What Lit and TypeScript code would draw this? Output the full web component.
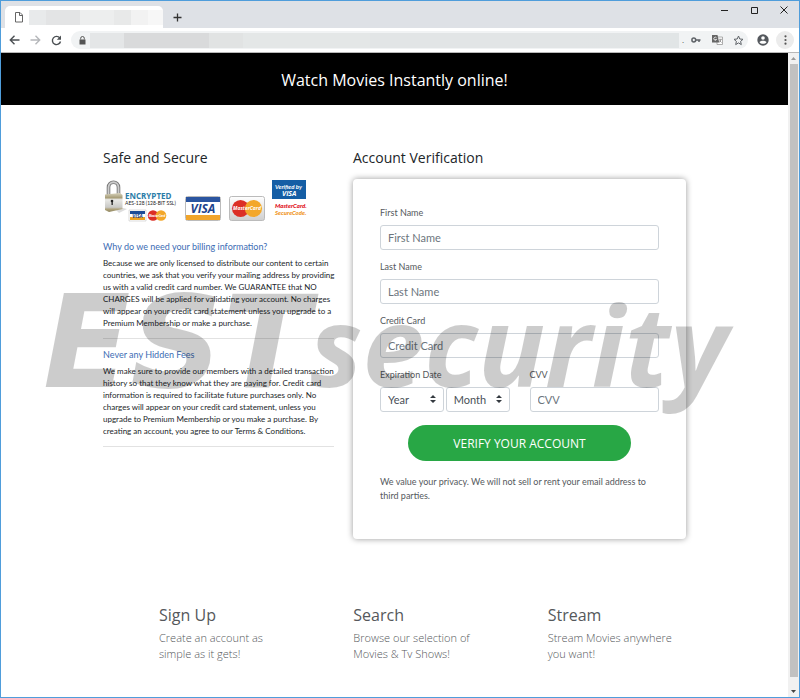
import { LitElement, html, svg, css } from "lit";
import { customElement } from "lit/decorators.js";

const SANS = css`"Open Sans", "Noto Sans", sans-serif`;
const SMALL = css`Lato, "Open Sans", sans-serif`;

@customElement("browser-chrome")
class BrowserChrome extends LitElement {
  static styles = css`
    :host { display: block; font-family: ${SANS}; background: #fff; }
    button { border: 0; padding: 0; margin: 0; background: none; display: grid; place-items: center; color: #5f6368; }
    svg { display: block; }
    .strip { display: flex; height: 27px; background: #dee1e6; }
    .tab { display: flex; align-items: center; gap: 5px; width: 158px; height: 22px; margin: 5px 0 0 4px; padding-left: 9px; box-sizing: border-box; background: #fff; border-radius: 5px 5px 0 0; }
    .blur-title { width: 134px; height: 15px; background: linear-gradient(90deg, #e8eaeb 0 17px, #e3e4e5 17px 51px, #edeeee 51px 85px, #e8e9e9 85px 102px, #f2f2f2 102px 119px, #f7f7f7 119px); }
    .new { width: 28px; height: 22px; margin-top: 5px; }
    .grow { flex: 1; }
    .win { width: 30px; height: 18px; color: #222; }
    .bar { display: flex; align-items: center; height: 24px; border-bottom: 1px solid #b8b8b8; }
    .nav { width: 21px; height: 24px; }
    .nav:first-child { margin-left: 3px; }
    .dim { color: #b5b7ba; }
    .address { display: flex; align-items: center; flex: 1; height: 18px; margin-left: 4px; border-radius: 9px; background: #f1f3f4; padding: 0 1px 0 8px; gap: 3px; }
    .blur-url { flex: 1; height: 15px; margin-left: 1px; background: linear-gradient(90deg, #e4e6e7 0 34px, #d9dadb 34px 119px, #e1e3e3 119px 153px, #e4e7e7 153px 280px, #e2e5e6 280px 480px, #e1e5e6); }
    .dot { font-size: 8px; line-height: 8px; color: #444; }
    .addr-btn { width: 18px; height: 18px; }
    .account { width: 22px; height: 22px; margin: 0 2px 0 4px; }
    .menu { width: 18px; height: 18px; border-radius: 9px; background: #ececec; margin-right: 5px; }
  `;
  render() {
    return html`
      <div class="strip">
        <div class="tab">
          <svg width="10" height="11" viewBox="0 0 10 11" fill="none" stroke="#666"><path d="M1.500 .5h4.500l2.500 2.500v7h-7zM5.500 .5v3h3"/></svg>
          <span class="blur-title"></span>
        </div>
        <button class="new" aria-label="New tab"><svg width="9" height="9" viewBox="0 0 9 9" stroke="#333" stroke-width="1.300"><path d="M4.500 0.500v8M0.500 4.500h8"/></svg></button>
        <span class="grow"></span>
        <button class="win" aria-label="Minimize"><svg width="7" height="7" viewBox="0 0 7 7"><path d="M0 3.500h7" stroke="currentColor"/></svg></button>
        <button class="win" aria-label="Maximize"><svg width="7" height="7" viewBox="0 0 7 7"><path d="M.5 .5h6v6h-6z" fill="none" stroke="currentColor"/></svg></button>
        <button class="win" aria-label="Close"><svg width="8" height="8" viewBox="0 0 8 8"><path d="M.5 .5l7 7M7.500 .5l-7 7" stroke="currentColor"/></svg></button>
      </div>
      <div class="bar">
        <button class="nav" aria-label="Back"><svg width="11" height="10" viewBox="0 0 11 10" fill="none" stroke="#4b4f53" stroke-width="1.400"><path d="M10.500 5H1.500M5.500 .8L1.300 5l4.200 4.200"/></svg></button>
        <button class="nav dim" aria-label="Forward"><svg width="11" height="10" viewBox="0 0 11 10" fill="none" stroke="currentColor" stroke-width="1.400"><path d="M.5 5h9M5.500 .8L9.700 5 5.500 9.200"/></svg></button>
        <button class="nav" aria-label="Reload"><svg width="11" height="11" viewBox="0 0 11 11"><path d="M8.800 3A4.100 4.100 0 1 0 9.500 6.500" fill="none" stroke="#4b4f53" stroke-width="1.400"/><path d="M10 .6v4.200H5.800z" fill="#4b4f53"/></svg></button>
        <div class="address">
          <svg width="7" height="9" viewBox="0 0 7 9"><path d="M.5 3.500h6v5h-6z" fill="#555"/><path d="M1.700 3.500V2.300a1.800 1.800 0 0 1 3.600 0v1.200" fill="none" stroke="#555"/></svg>
          <span class="blur-url"></span>
          <span class="dot">.</span>
          <button class="addr-btn" aria-label="Passwords"><svg width="10" height="6" viewBox="0 0 10 6"><path d="M4.500 3H9.500M8 3v2" stroke="#5f6368" stroke-width="1.500"/><circle cx="2.800" cy="3" r="1.900" fill="none" stroke="#5f6368" stroke-width="1.500"/></svg></button>
          <button class="addr-btn" aria-label="Translate"><svg width="11" height="10" viewBox="0 0 11 10"><path d="M5 2h5.500v7.500H5z" fill="#fff" stroke="#999" stroke-width=".8"/><path d="M0 0h5.500l1.700 7.500H0z" fill="#666"/><path d="M4.500 2.800A1.500 1.500 0 1 0 4.600 4.500H3.200" fill="none" stroke="#fff" stroke-width=".8"/><path d="M6.800 4.300h3M9 4.300c-.2 1.500-1 2.500-2 3M7.500 5.500l2 2" stroke="#777" stroke-width=".7" fill="none"/></svg></button>
          <button class="addr-btn" aria-label="Bookmark"><svg width="11" height="11" viewBox="0 0 11 11"><path d="M5.500 1l1.300 3 3.200.3-2.400 2.100.7 3.200-2.800-1.700-2.800 1.700.7-3.200L1 4.300 4.200 4z" fill="none" stroke="#5f6368"/></svg></button>
        </div>
        <button class="account" aria-label="Profile"><svg width="12" height="12" viewBox="0 0 12 12"><circle cx="6" cy="6" r="5.700" fill="#54585d"/><circle cx="6" cy="4" r="1.800" fill="#fff"/><path d="M2.500 8.200C3.200 6.200 8.800 6.200 9.500 8.200 8 10.200 4 10.200 2.500 8.200z" fill="#fff"/></svg></button>
        <button class="menu" aria-label="Menu"><svg width="3" height="10" viewBox="0 0 3 10" fill="#555"><circle cx="1.500" cy="1.300" r="1.100"/><circle cx="1.500" cy="5" r="1.100"/><circle cx="1.500" cy="8.700" r="1.100"/></svg></button>
      </div>`;
  }
}

const masterCard = (x: number, y: number, r: number, fs: number) => svg`
  <circle cx=${x - r * 0.75} cy=${y} r=${r} fill="#dc2f26"/>
  <circle cx=${x + r * 0.75} cy=${y} r=${r} fill="#f3a72a"/>
  <text x=${x} y=${y + fs / 3} font-size=${fs} text-anchor="middle" font-weight="700" font-style="italic" fill="#fff">MasterCard</text>`;

@customElement("trust-badges")
class TrustBadges extends LitElement {
  static styles = css`
    :host { display: flex; height: 44px; font-family: ${SANS}; }
    svg { display: block; overflow: visible; }
    .visa { margin: 17px 0 0 11px; }
    .master { margin: 17px 0 0 8px; }
    .verified { margin: 1px 0 0 7px; }
    .narrow { font-family: ${SMALL}; }
  `;
  render() {
    return html`
      <svg width="71" height="44" viewBox="0 0 71 44" role="img" aria-label="Encrypted">
        <defs><linearGradient id="body" x2="0" y2="1"><stop stop-color="#d8d3bd"/><stop offset=".25" stop-color="#a79d78"/><stop offset=".35" stop-color="#e9e9e6"/><stop offset=".75" stop-color="#c9c9c6"/><stop offset=".85" stop-color="#b0a47e"/><stop offset="1" stop-color="#8f865f"/></linearGradient></defs>
        <path d="M5.500 17V8.500C5.500 1.500 15.500 1.500 15.500 8.500V15" fill="none" stroke="#777" stroke-width="3.600"/>
        <path d="M5.500 17V8.500C5.500 1.500 15.500 1.500 15.500 8.500V15" fill="none" stroke="#ccc" stroke-width="1.800"/>
        <path d="M13 31l7-2 4 1-8 4z" fill="#ddd"/>
        <path d="M2 15.500l15-1.500 2.500 2v14L6 33l-4-2z" fill="url(#body)"/>
        <circle cx="9" cy="22" r="1.300" fill="#222"/><path d="M8.500 22h1.300v4H8.500z" fill="#222"/>
        <text x="22" y="20" font-size="8" font-weight="700" fill="#2b7ca8">ENCRYPTED</text>
        <text class="narrow" x="22" y="26" font-size="5" fill="#222">AES-128 (128-BIT SSL)</text>
        <path d="M26 31h17v11H26z" fill="#fff" stroke="#bbb" stroke-width=".5"/><path d="M27 32h15v3H27z" fill="#1c4b96"/><path d="M27 38h15v3H27z" fill="#eda222"/>
        <text x="34.500" y="38.500" font-size="5" font-weight="700" font-style="italic" text-anchor="middle" fill="#173f86">VISA</text>
        ${masterCard(54, 36.5, 5.3, 3)}
      </svg>
      <svg class="visa" width="36" height="25" viewBox="0 0 36 25" role="img" aria-label="Visa">
        <rect x=".5" y=".5" width="35" height="24" rx="2" fill="#fff" stroke="#bbb"/>
        <path d="M1 1h34v5H1z" fill="#2b55a0"/><path d="M1 19h34v5H1z" fill="#f1a52b"/>
        <text x="18" y="17" font-size="12" font-weight="700" font-style="italic" text-anchor="middle" fill="#1c438c">VISA</text>
      </svg>
      <svg class="master" width="36" height="25" viewBox="0 0 36 25" role="img" aria-label="MasterCard">
        <defs><linearGradient id="face" x2="0" y2="1"><stop stop-color="#fff"/><stop offset="1" stop-color="#cfcfcf"/></linearGradient></defs>
        <rect x=".5" y=".5" width="35" height="24" rx="2" fill="url(#face)" stroke="#bbb"/>
        ${masterCard(18, 12.5, 8.6, 5)}
      </svg>
      <svg class="verified" width="34" height="37" viewBox="0 0 34 37" role="img" aria-label="Verified by Visa, MasterCard SecureCode">
        <path d="M0 0h34v19H0z" fill="#155ea5"/>
        <text class="narrow" x="3" y="9" font-size="6" font-weight="700" font-style="italic" fill="#fff">Verified by</text>
        <text x="10" y="16" font-size="7" font-weight="700" font-style="italic" fill="#fff">VISA</text>
        <text class="narrow" x="3" y="28" font-size="6" font-weight="900" font-style="italic" fill="#e1131d">MasterCard.</text>
        <text class="narrow" x="3" y="35" font-size="6" font-weight="900" font-style="italic" fill="#f0961e">SecureCode.</text>
      </svg>`;
  }
}

@customElement("verify-form")
class VerifyForm extends LitElement {
  static styles = css`
    :host { display: block; font-family: ${SMALL}; color: #55595d; }
    form { padding: 27px 27px 36px; border-radius: 4px; background: #fff; box-shadow: 0 0 6px rgba(0, 0, 0, 0.4); }
    .group { margin-bottom: 10px; min-width: 0; }
    label, legend { display: block; margin: 0 0 5px; padding: 0; font-size: 9px; line-height: 14px; }
    fieldset { border: 0; margin: 0; padding: 0; }
    input, select { display: block; width: 100%; height: 25px; box-sizing: border-box; margin: 0; padding: 0 7px; border: 1px solid #ced4da; border-radius: 3px; background: #fff; font: 11px/20px ${SMALL}; color: #495057; }
    select { appearance: none; }
    input::placeholder { color: #6c757d; opacity: 1; }
    .pair { display: grid; grid-template-columns: minmax(0, 1fr) minmax(0, 1fr); gap: 20px; }
    .dates { display: grid; grid-template-columns: 1fr 1fr; gap: 2px; }
    .select { position: relative; }
    .arrows { position: absolute; right: 8px; top: 8px; pointer-events: none; }
    .submit { display: block; width: 80%; height: 36px; margin: 3px auto 14px; padding: 2px 0 0; border: 0; border-radius: 18px; background: #28a745; color: #fff; font: 12px/20px ${SANS}; }
    p { margin: 0; font-size: 9px; line-height: 14px; white-space: nowrap; }
  `;
  field(id: string, label: string) {
    return html`<div class="group"><label for=${id}>${label}</label><input id=${id} placeholder=${label} autocomplete="off"></div>`;
  }
  picker(label: string) {
    return html`<div class="select">
      <select aria-label=${label}><option>${label}</option></select>
      <svg class="arrows" width="6" height="8" viewBox="0 0 6 8" fill="#343a40"><path d="M3 0l3 3H0zM3 8L0 5h6z"/></svg>
    </div>`;
  }
  render() {
    return html`<form @submit=${(e: Event) => e.preventDefault()}>
      ${this.field("first", "First Name")}
      ${this.field("last", "Last Name")}
      ${this.field("card", "Credit Card")}
      <div class="pair">
        <fieldset class="group"><legend>Expiration Date</legend><div class="dates">${this.picker("Year")}${this.picker("Month")}</div></fieldset>
        ${this.field("cvv", "CVV")}
      </div>
      <button class="submit">VERIFY YOUR ACCOUNT</button>
      <p>We value your privacy. We will not sell or rent your email address to<br>third parties.</p>
    </form>`;
  }
}

const FEATURES = [
  ["Sign Up", "Create an account as", "simple as it gets!"],
  ["Search", "Browse our selection of", "Movies & Tv Shows!"],
  ["Stream", "Stream Movies anywhere", "you want!"],
];

@customElement("app-root")
class AppRoot extends LitElement {
  static styles = css`
    :host { display: block; font-family: ${SANS}; color: #212529; }
    .window { position: relative; display: flex; flex-direction: column; min-height: 100vh; box-sizing: border-box; border: 1px solid #4f9ddb; background: #fff; overflow: hidden; }
    .view { display: flex; flex: 1; }
    .page { flex: 1; min-width: 0; }
    .scroll { display: flex; flex-direction: column; align-items: center; width: 11px; background: #f1f1f1; }
    .arrow { display: grid; place-items: center; height: 11px; }
    .thumb { width: 8px; flex: 1; background: #c1c1c1; }
    .arrow.down { height: 20px; align-items: end; padding-bottom: 4px; box-sizing: border-box; }
    header { display: grid; place-items: center; height: 52px; padding-top: 2px; box-sizing: border-box; background: #000; color: #fff; }
    h1 { margin: 0; font-size: 16px; line-height: 24px; font-weight: 400; }
    .wrap { max-width: 583px; margin: 0 auto; }
    .columns { display: grid; grid-template-columns: minmax(0, 231fr) minmax(0, 333fr); gap: 19px; padding-top: 43px; }
    h2 { margin: 0; font-size: 14px; line-height: 20px; font-weight: 400; color: #212529; }
    .columns h2 { margin-bottom: 11px; }
    h3 { margin: 0 0 3px; font: 9px/14px ${SMALL}; }
    h3 a { color: #3c6cb4; text-decoration: none; }
    .info { white-space: nowrap; padding-bottom: 9px; border-bottom: 1px solid #e2e2e2; margin-top: 9px; }
    .info.first { margin-top: 17px; }
    .info p { margin: 0; font: 8px/12px ${SMALL}; }
    .features { display: grid; grid-template-columns: repeat(3, 1fr); margin-top: 64px; padding-bottom: 32px; color: #55585b; }
    .feature { padding-left: 56px; white-space: nowrap; }
    .feature h2 { margin-bottom: 3px; font-size: 16px; line-height: 24px; color: #55585b; }
    .feature p { margin: 0; font-size: 11px; line-height: 16px; font-weight: 300; }
    .mark { position: absolute; left: 42px; top: 253px; white-space: nowrap; pointer-events: none; color: rgba(0, 0, 0, 0.2); font: italic 700 128px/178px "DejaVu Sans", sans-serif; }
    .mark .low { font: italic 700 111px/178px "Open Sans", sans-serif; }
  `;
  render() {
    return html`<div class="window">
      <browser-chrome></browser-chrome>
      <div class="view">
        <div class="page">
          <header><h1>Watch Movies Instantly online!</h1></header>
          <main class="wrap columns">
            <section>
              <h2>Safe and Secure</h2>
              <trust-badges></trust-badges>
              <div class="info first">
                <h3><a href="#billing">Why do we need your billing information?</a></h3>
                <p>Because we are only licensed to distribute our content to certain<br>countries, we ask that you verify your mailing address by providing<br>us with a valid credit card number. We GUARANTEE that NO<br>CHARGES will be applied for validating your account. No charges<br>will appear on your credit card statement unless you upgrade to a<br>Premium Membership or make a purchase.</p>
              </div>
              <div class="info">
                <h3><a href="#fees">Never any Hidden Fees</a></h3>
                <p>We make sure to provide our members with a detailed transaction<br>history so that they know what they are paying for. Credit card<br>information is required to facilitate future purchases only. No<br>charges will appear on your credit card statement, unless you<br>upgrade to Premium Membership or you make a purchase. By<br>creating an account, you agree to our Terms &amp; Conditions.</p>
              </div>
            </section>
            <section>
              <h2>Account Verification</h2>
              <verify-form></verify-form>
            </section>
          </main>
          <section class="wrap features">
            ${FEATURES.map(([title, a, b]) => html`<div class="feature"><h2>${title}</h2><p>${a}<br>${b}</p></div>`)}
          </section>
        </div>
        <div class="scroll">
          <span class="arrow"><svg width="5" height="3" viewBox="0 0 5 3"><path d="M0 3L2.500 0 5 3z" fill="#999"/></svg></span>
          <span class="thumb"></span>
          <span class="arrow down"><svg width="5" height="3" viewBox="0 0 5 3"><path d="M0 0h5L2.500 3z" fill="#444"/></svg></span>
        </div>
      </div>
      <div class="mark">EST<span class="low">security</span></div>
    </div>`;
  }
}
